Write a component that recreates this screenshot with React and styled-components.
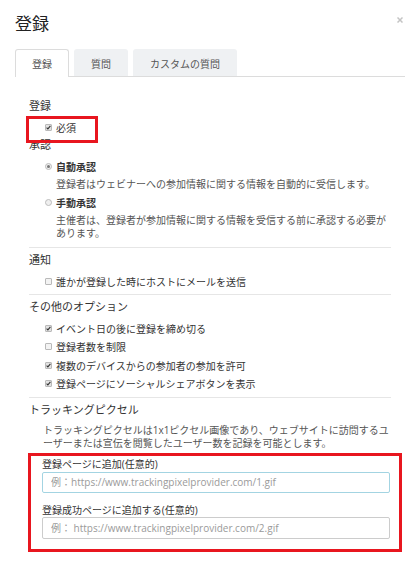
import React from "react";
import styled, { createGlobalStyle } from "styled-components";

const Global = createGlobalStyle`
  html, body { margin: 0; padding: 0; background: #fff; }
  body { font-family: "Open Sans", "Noto Sans CJK JP", sans-serif; color: #333; }
  * { box-sizing: border-box; }
`;

const Modal = styled.div`
  width: 412px;
  height: 564px;
  padding: 11px 7px 0 15px;
  background: #fff;
  overflow: hidden;
`;

const Header = styled.div`
  display: flex;
  justify-content: space-between;
  align-items: flex-start;
  height: 24px;
`;

const Title = styled.h1`
  margin: 0;
  font-family: "Noto Sans CJK JP", sans-serif;
  font-size: 17px;
  line-height: 24px;
  font-weight: 400;
  color: #222;
`;

const Close = styled.button`
  display: flex;
  margin: 6px 2px 0 0;
  padding: 0;
  width: 6px;
  height: 6px;
  border: 0;
  background: none;
  cursor: pointer;
`;

const TabBar = styled.div`
  display: flex;
  align-items: flex-start;
  gap: 5px;
  height: 28px;
  margin-top: 14px;
  border-bottom: 1px solid #dcdcdc;
`;

const Tab = styled.div`
  height: ${(p) => (p.$active ? "28px" : "27px")};
  padding: 0 16px;
  border: 1px solid ${(p) => (p.$active ? "#dcdcdc" : "transparent")};
  border-bottom: 0;
  border-radius: 3px 3px 0 0;
  background: ${(p) => (p.$active ? "#fff" : "#eff1f3")};
  color: #555;
  font-family: "Noto Sans CJK JP", sans-serif;
  font-size: 10px;
  line-height: 27px;
  white-space: nowrap;
`;

const Body = styled.div`
  padding: 0 14px;
`;

const Section = styled.section`
  margin-top: ${(p) => p.$mt || 0}px;
  border-top: ${(p) => (p.$divided ? "1px solid #e6e6e6" : "0")};
`;

const SectionTitle = styled.div`
  margin-top: ${(p) => p.$mt}px;
  font-size: 11px;
  line-height: 18px;
  color: #333;
`;

const OptionRow = styled.div`
  display: flex;
  align-items: center;
  gap: 4px;
  height: 18px;
  margin-top: ${(p) => p.$mt || 0}px;
  padding-left: 16px;
  font-size: 10px;
  color: #333;
  font-weight: ${(p) => (p.$bold ? 700 : 400)};
  white-space: nowrap;
`;

const HighlightRow = styled(OptionRow)`
  position: relative;
  &::after {
    content: "";
    position: absolute;
    left: -3px;
    top: -2px;
    width: 66px;
    height: 21px;
    border: 3px solid #e8161f;
    pointer-events: none;
  }
`;

const OptionList = styled.div`
  display: flex;
  flex-direction: column;
  gap: 0.5px;
  margin-top: 3px;
`;

const Box = styled.span`
  display: inline-flex;
  flex: none;
  width: 7px;
  height: 7px;
  border: 1px solid #b9b9b9;
  border-radius: 1px;
  background: ${(p) => (p.$checked ? "#e2e2e2" : "#f3f3f3")};
`;

const Radio = styled.span`
  display: inline-flex;
  align-items: center;
  justify-content: center;
  flex: none;
  width: 7px;
  height: 7px;
  border: 1px solid #bcbcbc;
  border-radius: 50%;
  background: #efefef;
  &::after {
    content: "";
    width: 3px;
    height: 3px;
    border-radius: 50%;
    background: ${(p) => (p.$checked ? "#777" : "transparent")};
  }
`;

const Desc = styled.div`
  margin-top: ${(p) => p.$mt}px;
  padding-left: ${(p) => p.$indent}px;
  font-size: 10px;
  line-height: 13px;
  color: #555;
  white-space: nowrap;
`;

const TrackingBox = styled.div`
  position: relative;
  margin-top: 3px;
  padding: 4px 1px 13px 13px;
  &::after {
    content: "";
    position: absolute;
    top: 0;
    bottom: 0;
    left: -1px;
    right: -11px;
    border: 3px solid #e8161f;
    pointer-events: none;
  }
`;

const FieldLabel = styled.div`
  margin-top: ${(p) => p.$mt || 0}px;
  font-size: 10px;
  line-height: 14px;
  color: #333;
  white-space: nowrap;
`;

const Input = styled.input`
  display: block;
  width: 100%;
  height: ${(p) => p.$h}px;
  margin-top: ${(p) => p.$mt || 0}px;
  padding: 0 8px;
  border: 1px solid ${(p) => (p.$focused ? "#a3d4e2" : "#cccccc")};
  border-radius: 2px;
  font-family: "Open Sans", "Noto Sans CJK JP", sans-serif;
  font-size: 10px;
  color: #333;
  outline: none;
  background: #fff;
  &::placeholder { color: #9a9a9a; }
`;

const Check = ({ checked }) => (
  <Box $checked={checked}>
    {checked && (
      <svg width="5" height="5" viewBox="0 0 5 5">
        <path d="M0.6 2.6 L1.9 3.9 L4.4 0.9" fill="none" stroke="#333" strokeWidth="1.1" />
      </svg>
    )}
  </Box>
);

export default function App() {
  return (
    <>
      <Global />
      <Modal>
        <Header>
          <Title>登録</Title>
          <Close aria-label="close">
            <svg width="6" height="6" viewBox="0 0 6 6">
              <path d="M0.5 0.5 L5.5 5.5 M5.5 0.5 L0.5 5.5" stroke="#c4c4c4" strokeWidth="1.5" />
            </svg>
          </Close>
        </Header>
        <TabBar>
          <Tab $active>登録</Tab>
          <Tab>質問</Tab>
          <Tab>カスタムの質問</Tab>
        </TabBar>
        <Body>
          <Section>
            <SectionTitle $mt={20}>登録</SectionTitle>
            <HighlightRow $mt={3}>
              <Check checked />
              必須
            </HighlightRow>
            <SectionTitle $mt={0}>承認</SectionTitle>
            <OptionRow $mt={3} $bold>
              <Radio $checked />
              自動承認
            </OptionRow>
            <Desc $mt={3} $indent={27}>
              登録者はウェビナーへの参加情報に関する情報を自動的に受信します。
            </Desc>
            <OptionRow $mt={2} $bold>
              <Radio />
              手動承認
            </OptionRow>
            <Desc $mt={3} $indent={27}>
              主催者は、登録者が参加情報に関する情報を受信する前に承認する必要が
              <br />
              あります。
            </Desc>
          </Section>
          <Section $divided $mt={7}>
            <SectionTitle $mt={3}>通知</SectionTitle>
            <OptionRow $mt={3}>
              <Check />
              誰かが登録した時にホストにメールを送信
            </OptionRow>
          </Section>
          <Section $divided $mt={4}>
            <SectionTitle $mt={3}>その他のオプション</SectionTitle>
            <OptionList>
              <OptionRow>
                <Check checked />
                イベント日の後に登録を締め切る
              </OptionRow>
              <OptionRow>
                <Check />
                登録者数を制限
              </OptionRow>
              <OptionRow>
                <Check checked />
                複数のデバイスからの参加者の参加を許可
              </OptionRow>
              <OptionRow>
                <Check checked />
                登録ページにソーシャルシェアボタンを表示
              </OptionRow>
            </OptionList>
          </Section>
          <Section $divided $mt={4}>
            <SectionTitle $mt={3}>トラッキングピクセル</SectionTitle>
            <Desc $mt={5} $indent={14}>
              トラッキングピクセルは1x1ピクセル画像であり、ウェブサイトに訪問するユ
              <br />
              ーザーまたは宣伝を閲覧したユーザー数を記録を可能とします。
            </Desc>
            <TrackingBox>
              <FieldLabel>登録ページに追加(任意的)</FieldLabel>
              <Input
                $h={21}
                $mt={1}
                $focused
                autoFocus
                placeholder="例：https://www.trackingpixelprovider.com/1.gif"
              />
              <FieldLabel $mt={10}>登録成功ページに追加する(任意的)</FieldLabel>
              <Input $h={22} placeholder="例： https://www.trackingpixelprovider.com/2.gif" />
            </TrackingBox>
          </Section>
        </Body>
      </Modal>
    </>
  );
}
